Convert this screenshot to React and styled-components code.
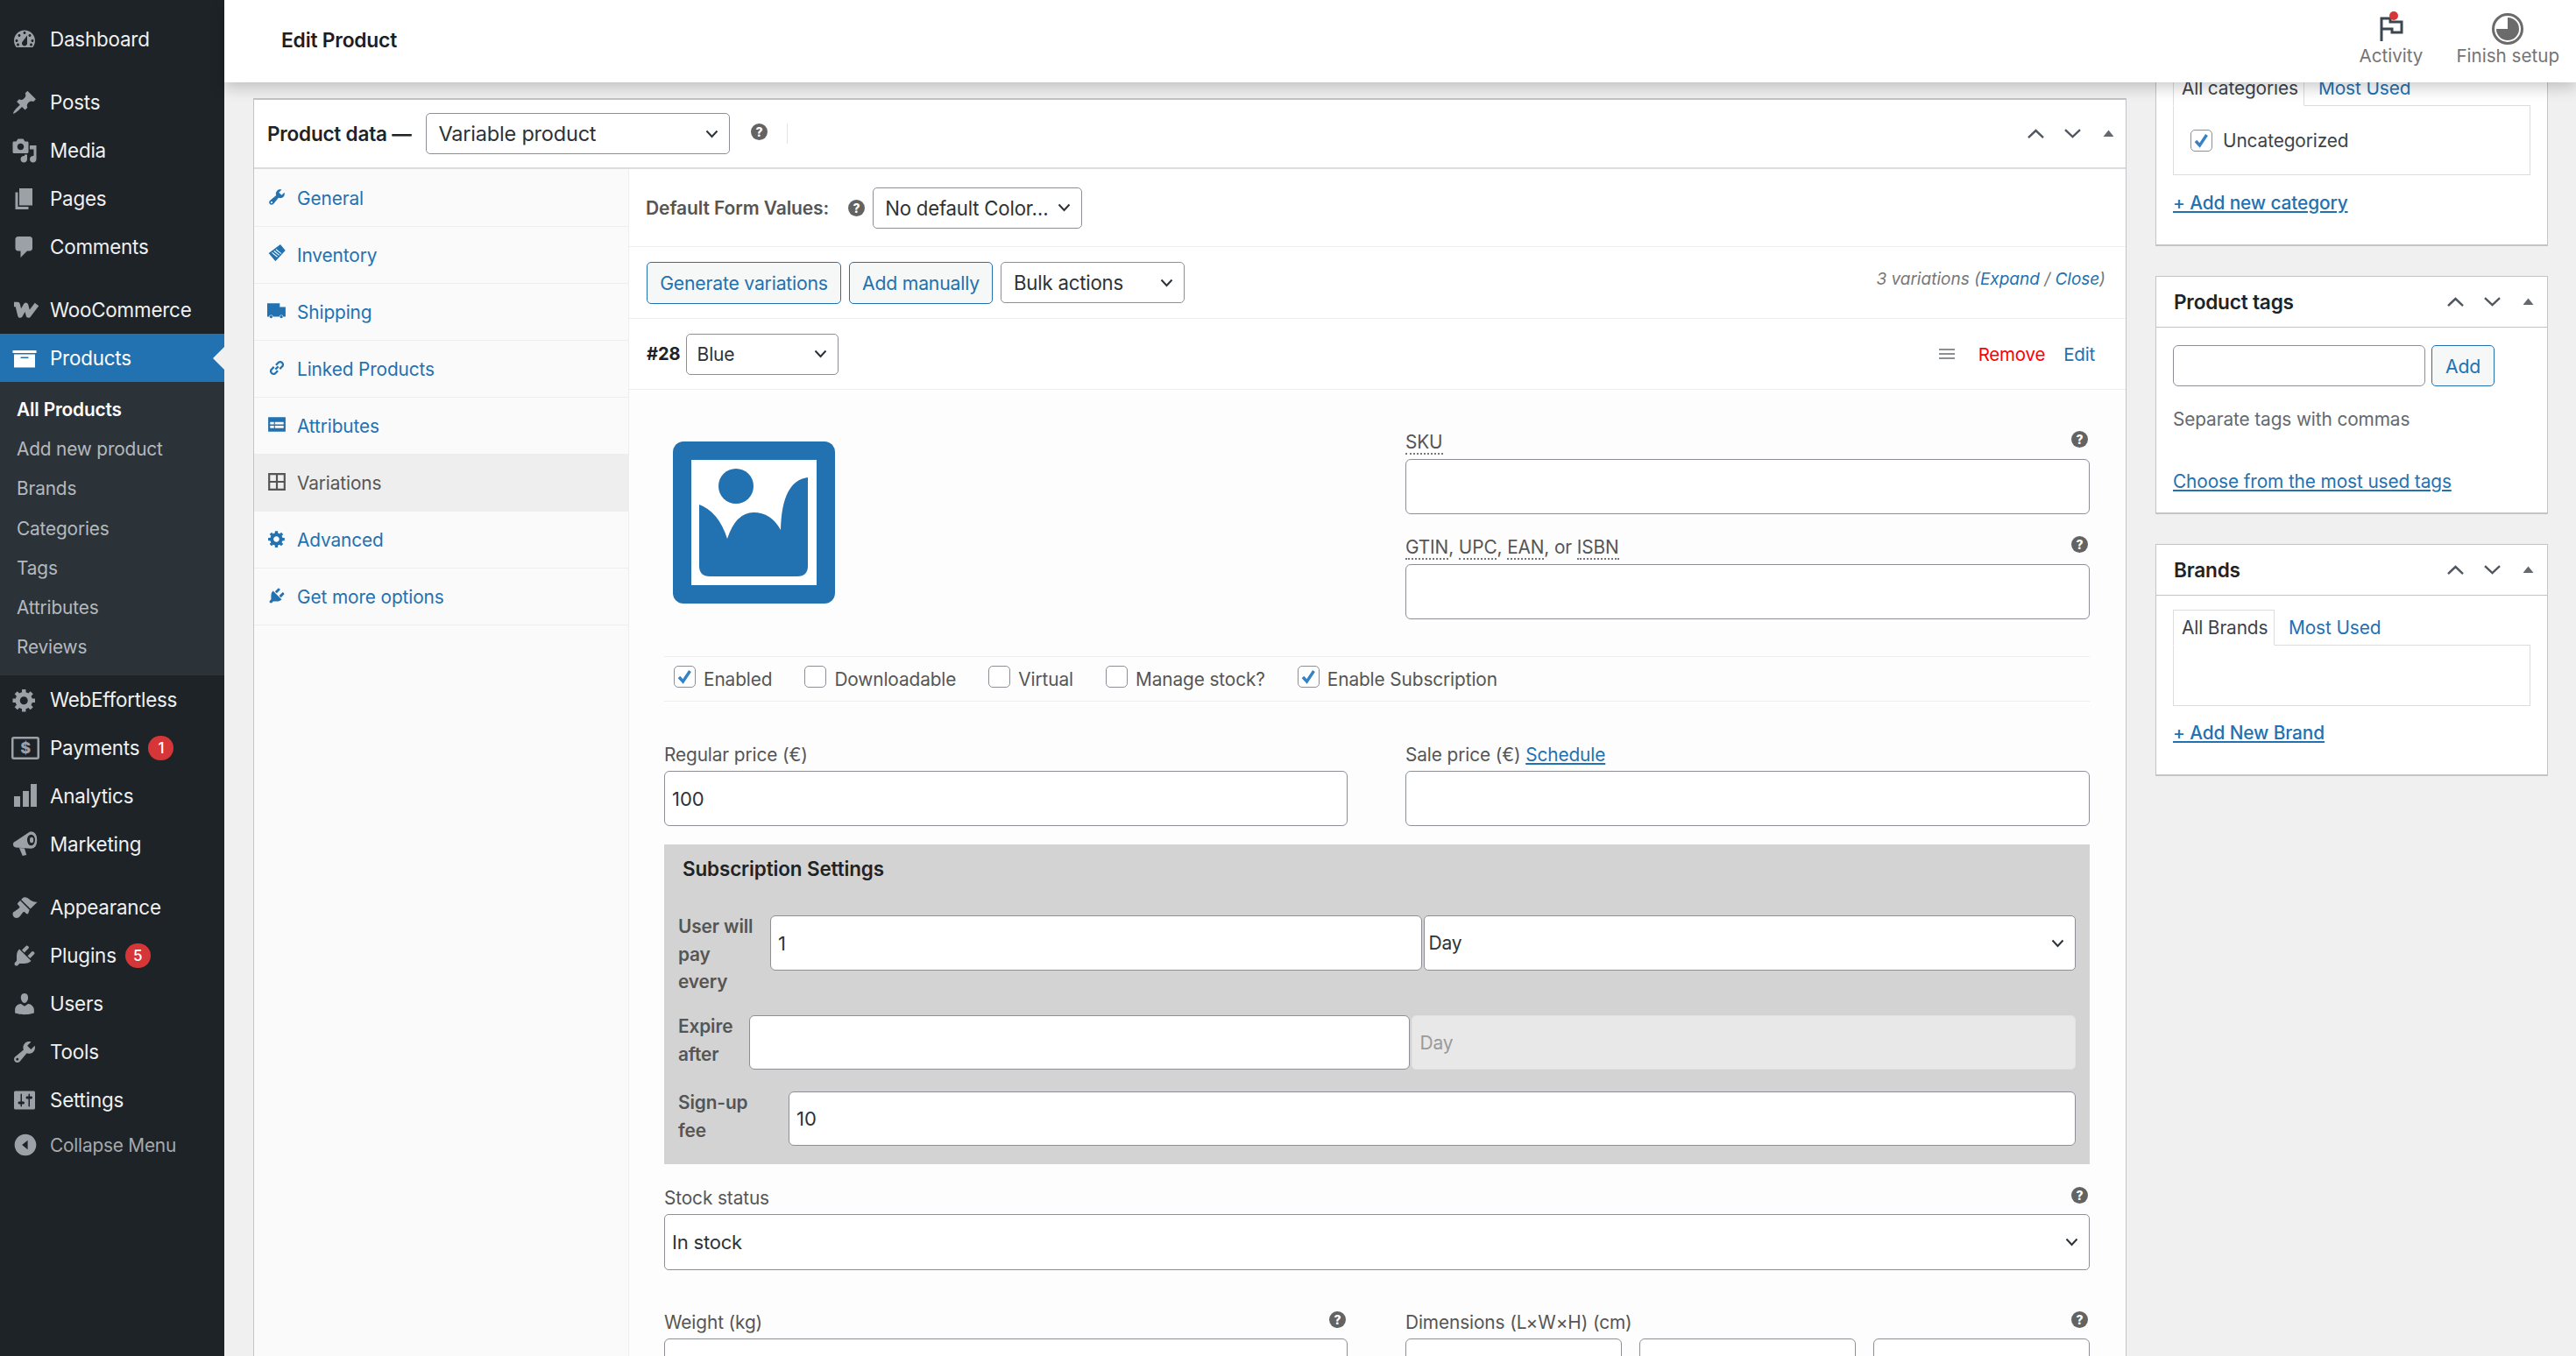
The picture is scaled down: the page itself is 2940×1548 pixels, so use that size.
import React from "react";
import styled, { createGlobalStyle } from "styled-components";

const GlobalStyle = createGlobalStyle`
  html, body { margin: 0; padding: 0; background: #f0f0f1; }
  * { box-sizing: border-box; }
  body { font-family: Inter, "Noto Sans", sans-serif; font-size: 20.8px; color: #3c434a; }
`;

const blue = "#2271b1";

const Page = styled.div`
  display: flex;
  width: 2940px;
  height: 1548px;
  overflow: hidden;
  background: #f0f0f1;
`;

/* ---------- admin menu ---------- */
const Sidebar = styled.nav`
  width: 256px;
  flex-shrink: 0;
  padding-top: 17px;
  background: #1d2327;
`;
const MenuGroup = styled.div`
  margin-bottom: 17px;
`;
const MenuRow = styled.div`
  position: relative;
  display: flex;
  align-items: center;
  height: 55px;
  padding-left: 57px;
  font-size: 22.4px;
  letter-spacing: -0.2px;
  color: ${(p) => (p.$active ? "#fff" : "#f0f0f1")};
  background: ${(p) => (p.$active ? blue : "transparent")};
  svg { position: absolute; left: ${(p) => p.$iconLeft || 13}px; top: 50%; transform: translateY(-50%); fill: ${(p) => (p.$active ? "#fff" : "#9ca1a7")}; }
  ${(p) => p.$active && `
    &::after {
      content: "";
      position: absolute;
      right: 0;
      top: 50%;
      margin-top: -13px;
      border: 13px solid transparent;
      border-right-color: #f0f0f1;
      border-left-width: 0;
    }
  `}
`;
const Badge = styled.span`
  display: inline-flex;
  align-items: center;
  justify-content: center;
  width: 29px;
  height: 28px;
  margin-left: 10px;
  border-radius: 14px;
  background: #d63638;
  color: #fff;
  font-size: 17px;
  font-weight: 500;
`;
const Submenu = styled.div`
  height: 335px;
  padding-top: 9px;
  background: #2c3338;
`;
const SubItem = styled.div`
  display: flex;
  align-items: center;
  height: 45.2px;
  padding-left: 19px;
  font-size: 20.8px;
  letter-spacing: -0.15px;
  color: ${(p) => (p.$active ? "#fff" : "#b4b9be")};
  font-weight: ${(p) => (p.$active ? 600 : 400)};
`;
const CollapseRow = styled(MenuRow)`
  height: 48px;
  font-size: 20.8px;
  color: #a7aaad;
`;

/* ---------- top bar ---------- */
const Main = styled.div`
  flex: 1;
  min-width: 0;
  display: flex;
  flex-direction: column;
`;
const TopBar = styled.header`
  position: relative;
  z-index: 2;
  flex-shrink: 0;
  display: flex;
  align-items: center;
  justify-content: space-between;
  height: 94px;
  padding: 0 19px 0 65px;
  background: #fff;
  box-shadow: 0 6px 16px rgba(0, 0, 0, 0.2);
`;
const PageTitle = styled.h1`
  margin: -3px 0 0;
  font-size: 22.8px;
  font-weight: 600;
  letter-spacing: -0.2px;
  color: #1e1e1e;
`;
const TopActions = styled.div`
  display: flex;
  gap: 38px;
  margin-top: -6px;
`;
const TopAction = styled.div`
  display: flex;
  flex-direction: column;
  align-items: center;
  gap: 1px;
  font-size: 20.6px;
  line-height: 24px;
  color: #757575;
  svg { display: block; }
`;

/* ---------- page body ---------- */
const Body = styled.div`
  flex: 1;
  min-height: 0;
  display: flex;
  gap: 33px;
  padding: 18px 32px 0 33px;
  overflow: hidden;
`;
const Panel = styled.section`
  flex: 1;
  min-width: 0;
  align-self: flex-start;
  background: #fff;
  border: 1px solid #c3c4c7;
  border-top-width: 2px;
`;
const PanelHead = styled.div`
  display: flex;
  align-items: center;
  height: 79px;
  padding: 0 13px 0 15px;
  border-bottom: 2px solid #dcdcde;
`;
const PanelTitle = styled.div`
  font-size: 22.5px;
  font-weight: 600;
  letter-spacing: -0.2px;
  color: #1d2327;
  margin-right: 16px;
`;
const PanelHelp = styled.span`
  display: block;
  height: 19px;
  margin: -5px 0 0 24px;
  svg { display: block; }
`;
const VLine = styled.span`
  width: 1px;
  height: 23px;
  margin-left: 22px;
  background: #e4e4e6;
`;
const MoveButtons = styled.div`
  margin-left: auto;
  display: flex;
  align-items: center;
  gap: 21px;
  svg { display: block; }
  svg:last-child { margin-left: 3px; }
`;

const Columns = styled.div`
  display: flex;
`;
const Tabs = styled.ul`
  width: 428px;
  flex-shrink: 0;
  margin: 0;
  padding: 1px 0 0;
  list-style: none;
  background: #fafafa;
  border-right: 1px solid #eee;
`;
const Tab = styled.li`
  position: relative;
  display: flex;
  align-items: center;
  height: 65px;
  padding-left: 49px;
  font-size: 20.8px;
  letter-spacing: -0.1px;
  color: ${(p) => (p.$active ? "#555" : blue)};
  background: ${(p) => (p.$active ? "#eee" : "transparent")};
  border-bottom: 1px solid #eee;
  svg { position: absolute; left: 15px; top: 20px; fill: ${(p) => (p.$active ? "#555" : blue)}; }
`;
const Content = styled.div`
  flex: 1;
  min-width: 0;
`;
const DefaultsRow = styled.div`
  display: flex;
  align-items: center;
  height: 89px;
  padding-left: 19px;
  border-bottom: 1px solid #eee;
`;
const BoldLabel = styled.span`
  font-size: 21px;
  font-weight: 600;
  letter-spacing: -0.1px;
  color: #555;
  margin-right: 22px;
`;
const DefaultSelectWrap = styled.div`
  margin-left: 9px;
`;
const ToolbarRow = styled.div`
  display: flex;
  align-items: center;
  gap: 9px;
  height: 82px;
  padding: 0 23px 0 20px;
  border-bottom: 1px solid #eee;
`;
const Button = styled.span`
  display: inline-flex;
  align-items: center;
  justify-content: center;
  height: ${(p) => p.$height || 48}px;
  width: ${(p) => p.$width}px;
  border: 1px solid ${blue};
  border-radius: 5px;
  background: #f6f7f7;
  color: ${blue};
  font-size: 21.2px;
  letter-spacing: -0.2px;
`;
const Count = styled.span`
  margin-left: auto;
  margin-top: -9px;
  font-size: 19px;
  font-style: italic;
  color: #777;
  a { color: ${blue}; }
`;
const VariationRow = styled.div`
  display: flex;
  align-items: center;
  height: 81px;
  padding: 0 35px 0 20px;
  border-bottom: 1px solid #eee;
`;
const VariationId = styled.strong`
  font-size: 20px;
  font-weight: 700;
  color: #1d2327;
  margin-right: 6px;
`;
const VariationActions = styled.div`
  margin-left: auto;
  display: flex;
  align-items: center;
  font-size: 20.5px;
  letter-spacing: -0.2px;
`;
const ActionLink = styled.a`
  color: ${(p) => p.$color};
  margin-left: ${(p) => p.$gap}px;
`;

/* ---------- form controls ---------- */
const Select = styled.div`
  display: flex;
  align-items: center;
  justify-content: space-between;
  flex: ${(p) => (p.$width ? "none" : 1)};
  width: ${(p) => (p.$width ? `${p.$width}px` : "auto")};
  min-width: 0;
  height: ${(p) => p.$height || 47}px;
  padding: 0 12px 0 ${(p) => p.$left || 14}px;
  background: #fff;
  border: 1px solid #8c8f94;
  border-radius: 5px;
  font-size: ${(p) => p.$size || 22.2}px;
  letter-spacing: -0.2px;
  color: #2c3338;
  white-space: nowrap;
`;
const DisabledSelect = styled(Select)`
  background: #e8e8e8;
  border-color: #e2e2e2;
  color: #9a9a9a;
`;
const Input = styled.input`
  display: block;
  flex: ${(p) => (p.$width ? "none" : 1)};
  width: ${(p) => (p.$width ? `${p.$width}px` : "100%")};
  min-width: 0;
  height: ${(p) => p.$height || 63}px;
  padding: 0 8px;
  background: #fff;
  border: 1px solid #8c8f94;
  border-radius: 6px;
  font: inherit;
  font-size: 22px;
  color: #2c3338;
  outline: none;
`;

const Form = styled.div`
  padding: 46px 41px 0 40px;
  background: #fdfdfd;
  height: 1200px;
`;
const TwoCols = styled.div`
  display: grid;
  grid-template-columns: 780px 781px;
  column-gap: 66px;
`;
const ImageBox = styled.div`
  margin: 13px 0 0 10px;
  svg { display: block; }
`;
const FieldBlock = styled.div`
  margin-top: ${(p) => p.$top || 0}px;
`;
const FieldHead = styled.div`
  display: flex;
  align-items: flex-start;
  justify-content: space-between;
  height: 28px;
  margin-bottom: ${(p) => p.$gap ?? 4}px;
`;
const FieldLabel = styled.label`
  font-size: 20.8px;
  line-height: 28px;
  letter-spacing: -0.1px;
  color: #555;
  a { color: ${blue}; text-decoration: underline; }
`;
const Abbr = styled.span`
  border-bottom: 2px dotted #777;
`;
const HelpWrap = styled.span`
  display: block;
  margin: 1px 2px 0 0;
  height: 19px;
  svg { display: block; }
`;
const OptionsRow = styled.div`
  display: flex;
  align-items: center;
  height: 52px;
  margin-top: 42px;
  padding-left: 11px;
  border-top: 1px solid #eee;
  border-bottom: 1px solid #eee;
`;
const Option = styled.span`
  display: flex;
  align-items: center;
  gap: 9px;
  margin-right: 37px;
  font-size: 20.8px;
  letter-spacing: -0.1px;
  color: #555;
`;
const CheckBox = styled.span`
  display: block;
  width: 25px;
  height: 25px;
  margin-top: ${(p) => (p.$flat ? 0 : -6)}px;
  flex-shrink: 0;
  background: #fff;
  border: 1px solid #8c8f94;
  border-radius: 5px;
  svg { display: block; }
`;
const DimInputs = styled.div`
  display: flex;
  gap: 20px;
`;
const SubBox = styled.div`
  margin-top: 21px;
  padding: 14px 16px 21px;
  background: #d3d3d3;
`;
const SubTitle = styled.h4`
  margin: 0 0 39px 5px;
  font-size: 22.4px;
  line-height: 28px;
  font-weight: 600;
  letter-spacing: -0.1px;
  color: #1d2327;
`;
const SubRow = styled.div`
  display: flex;
  align-items: flex-start;
  gap: 2px;
  height: ${(p) => p.$height}px;
`;
const SubLabel = styled.label`
  flex: none;
  width: ${(p) => p.$width}px;
  margin: -3px -2px 0 0;
  font-size: 20.8px;
  font-weight: 600;
  line-height: 31.5px;
  letter-spacing: -0.1px;
  color: #555;
`;

/* ---------- side boxes ---------- */
const SideColumn = styled.aside`
  width: 448px;
  flex-shrink: 0;
  margin-top: -38px;
`;
const SideBox = styled.div`
  height: ${(p) => p.$height}px;
  margin-bottom: 34px;
  background: #fff;
  border: 1px solid #c3c4c7;
  border-bottom-width: 2px;
`;
const SideHead = styled.div`
  display: flex;
  align-items: center;
  justify-content: space-between;
  height: 58px;
  padding: 0 15px 0 20px;
  border-bottom: 1px solid #c3c4c7;
`;
const SideTitle = styled.h3`
  margin: 0;
  font-size: 22.6px;
  font-weight: 600;
  letter-spacing: -0.2px;
  color: #1d2327;
`;
const SideInner = styled.div`
  padding: ${(p) => p.$top || 0}px 19px 0;
`;
const TabStrip = styled.div`
  display: flex;
  align-items: center;
  height: 40px;
  font-size: 20.8px;
  letter-spacing: -0.1px;
`;
const TabCurrent = styled.span`
  display: flex;
  align-items: center;
  height: 41px;
  margin-bottom: -1px;
  padding: 0 9px;
  width: ${(p) => p.$width}px;
  background: #fff;
  border: 1px solid #dcdcde;
  border-bottom-color: #fff;
  color: #3c434a;
  position: relative;
  z-index: 1;
  white-space: nowrap;
`;
const TabOther = styled.span`
  margin-left: 16px;
  color: ${blue};
`;
const TabPanel = styled.div`
  display: flex;
  align-items: center;
  height: ${(p) => p.$height}px;
  padding-left: 19px;
  gap: 12px;
  border: 1px solid #dcdcde;
  font-size: 20.8px;
  letter-spacing: -0.1px;
  color: #3c434a;
`;
const SideLink = styled.a`
  display: block;
  margin-top: ${(p) => p.$top}px;
  font-size: 20.8px;
  line-height: 28px;
  letter-spacing: -0.1px;
  color: ${blue};
  text-decoration: underline;
  font-weight: ${(p) => (p.$bold ? 500 : 400)};
`;
const TagRow = styled.div`
  display: flex;
  gap: 7px;
`;
const Hint = styled.p`
  margin: 24px 0 0;
  font-size: 20.8px;
  line-height: 28px;
  letter-spacing: -0.1px;
  color: #646970;
`;

/* ---------- icons ---------- */
const Dash = ({ d, size = 30 }) => (
  <svg width={size} height={size} viewBox="0 0 20 20">
    <path fillRule="evenodd" d={d} />
  </svg>
);

const paths = {
  dashboard: "M3.76 16h12.48c1.1-1.37 1.76-3.11 1.76-5 0-4.42-3.58-8-8-8s-8 3.58-8 8c0 1.89.66 3.63 1.76 5zM10 4c.55 0 1 .45 1 1s-.45 1-1 1-1-.45-1-1 .45-1 1-1zM6 6c.55 0 1 .45 1 1s-.45 1-1 1-1-.45-1-1 .45-1 1-1zm8 0c.55 0 1 .45 1 1s-.45 1-1 1-1-.45-1-1 .45-1 1-1zm-5.37 5.55L12 7v6c0 1.1-.9 2-2 2s-2-.9-2-2c0-.57.24-1.08.63-1.45zM4 10c.55 0 1 .45 1 1s-.45 1-1 1-1-.45-1-1 .45-1 1-1zm12 0c.55 0 1 .45 1 1s-.45 1-1 1-1-.45-1-1 .45-1 1-1zm-11 3c.55 0 1 .45 1 1s-.45 1-1 1-1-.45-1-1 .45-1 1-1zm10 0c.55 0 1 .45 1 1s-.45 1-1 1-1-.45-1-1 .45-1 1-1z",
  post: "M10.44 3.02l1.82-1.82 6.36 6.35-1.83 1.82c-1.05-.68-2.48-.57-3.41.36l-.75.75c-.92.93-1.04 2.35-.35 3.41l-1.83 1.82-2.41-2.41-2.8 2.79c-.42.42-3.38 2.71-3.8 2.29s1.86-3.39 2.28-3.81l2.79-2.79L4.1 9.36l1.83-1.82c1.05.69 2.48.57 3.4-.36l.75-.75c.93-.92 1.05-2.35.36-3.41z",
  media: "M13 11V4c0-.55-.45-1-1-1h-1.67L9 1H5L3.67 3H2c-.55 0-1 .45-1 1v7c0 .55.45 1 1 1h10c.55 0 1-.45 1-1zM7 4.5c1.38 0 2.5 1.12 2.5 2.5S8.38 9.5 7 9.5 4.5 8.38 4.5 7 5.62 4.5 7 4.5zM14 6h5v10.5c0 1.38-1.12 2.5-2.5 2.5S14 17.88 14 16.5s1.12-2.5 2.5-2.5c.17 0 .34.02.5.05V9h-3V6zm-4 8.05V13h2v3.5c0 1.38-1.12 2.5-2.5 2.5S7 17.88 7 16.5 8.12 14 9.5 14c.17 0 .34.02.5.05z",
  page: "M6 15V2h10v13H6zm-1 1h8v2H3V5h2v11z",
  comments: "M5 2h9c1.1 0 2 .9 2 2v7c0 1.1-.9 2-2 2h-2l-5 5v-5H5c-1.1 0-2-.9-2-2V4c0-1.1.9-2 2-2z",
  archive: "M19 4v2H1V4h18zM2 7h16v10H2V7zm11 3V9H7v1h6z",
  gear: "M18 12h-2.18c-.17.7-.44 1.35-.81 1.93l1.54 1.54-2.1 2.1-1.54-1.54c-.58.36-1.23.63-1.91.79V19H8v-2.18c-.68-.16-1.33-.43-1.91-.79l-1.54 1.54-2.12-2.12 1.54-1.54c-.36-.58-.63-1.23-.79-1.91H1V9.03h2.17c.16-.7.44-1.35.8-1.94L2.43 5.55l2.1-2.1 1.54 1.54c.58-.37 1.24-.64 1.93-.81V2h3v2.18c.68.16 1.33.43 1.91.79l1.54-1.54 2.12 2.12-1.54 1.54c.36.59.64 1.24.8 1.94H18V12zm-8.5 1.5c1.66 0 3-1.34 3-3s-1.34-3-3-3-3 1.34-3 3 1.34 3 3 3z",
  bars: "M2 10h4.700v8H2zM8.700 6h4.600v12H8.700zM14.700.7h4.600V18h-4.600z",
  brush: "M14.48 11.06L7.41 3.99l1.5-1.5c.5-.56 2.3-.47 3.51.32 1.21.8 1.43 1.28 2.91 2.1 1.18.64 2.45 1.26 4.45.85zm-.71.71L6.7 4.7 4.93 6.47c-.39.39-.39 1.02 0 1.41l1.06 1.06c.39.39.39 1.03 0 1.42-.6.6-1.43 1.11-2.21 1.69-.35.26-.7.53-1.01.84C1.43 13.23 1 14.07 1 15c0 1.66 1.34 3 3 3 .93 0 1.77-.43 2.33-1.1.31-.31.58-.66.84-1.01.58-.78 1.09-1.61 1.69-2.21.39-.39 1.03-.39 1.42 0l1.06 1.06c.39.39 1.02.39 1.41 0z",
  plugin: "M13.11 4.36L9.87 7.6 8 5.73l3.24-3.24c.35-.34 1.05-.2 1.56.32.52.51.66 1.21.31 1.55zm-8 1.77l.91-1.12 9.01 9.01-1.19.84c-.71.71-2.63 1.16-3.82 1.16H6.14L4.9 17.26c-.59.59-1.54.59-2.12 0-.59-.58-.59-1.53 0-2.12l1.24-1.24v-3.88c0-1.13.4-3.19 1.09-3.89zm7.26 3.97l3.24-3.24c.34-.35 1.04-.21 1.55.31.52.51.66 1.21.31 1.55l-3.24 3.25z",
  users: "M10 9.25c-2.27 0-2.73-3.44-2.73-3.44C7 4.02 7.82 2 9.97 2c2.16 0 2.98 2.02 2.71 3.81 0 0-.41 3.44-2.68 3.44zm0 2.57L12.72 10c2.39 0 4.52 2.33 4.52 4.53v2.49s-3.65 1.13-7.24 1.13c-3.65 0-7.24-1.13-7.24-1.13v-2.49c0-2.25 1.94-4.48 4.47-4.48z",
  wrench: "M16.68 9.77c-1.34 1.34-3.3 1.67-4.95.99l-5.41 6.52c-.99.99-2.59.99-3.58 0s-.99-2.59 0-3.57l6.52-5.42c-.68-1.65-.35-3.61.99-4.95 1.28-1.28 3.12-1.62 4.72-1.06l-2.89 2.89 2.82 2.82 2.86-2.87c.53 1.58.18 3.39-1.08 4.65zM3.81 16.21c.4.39 1.04.39 1.43 0 .4-.4.4-1.04 0-1.43-.39-.4-1.03-.4-1.43 0-.39.39-.39 1.03 0 1.43z",
  settings: "M18 16V4c0-.55-.45-1-1-1H3c-.55 0-1 .45-1 1v12c0 .55.45 1 1 1h14c.55 0 1-.45 1-1zM8 11h1c.55 0 1 .45 1 1s-.45 1-1 1H8v1.5c0 .28-.22.5-.5.5s-.5-.22-.5-.5V13H6c-.55 0-1-.45-1-1s.45-1 1-1h1V5.5c0-.28.22-.5.5-.5s.5.22.5.5V11zm5-2h-1c-.55 0-1-.45-1-1s.45-1 1-1h1V5.5c0-.28.22-.5.5-.5s.5.22.5.5V7h1c.55 0 1 .45 1 1s-.45 1-1 1h-1v5.5c0 .28-.22.5-.5.5s-.5-.22-.5-.5V9z",
  collapse: "M10 .5c5.25 0 9.5 4.25 9.5 9.5s-4.25 9.5-9.5 9.5S.5 15.25.5 10 4.75.5 10 .5zM12 14V6l-5 4z",
  truck: "M0 2h13v4h6v10h-2.400a2 2 0 0 0-4 0H6a2 2 0 0 0-4 0H0z",
  link: "M8.500 11.500l3-3M7 9l-3 3a3 3 0 0 0 4 4l3-3M13 11l3-3a3 3 0 0 0-4-4L9 7",
  list: "M1 2h18v15H1zM3 7h4v2.500H3zM3 11h4v2.500H3zM8 7h9v2.500H8zM8 11h9v2.500H8z",
};

const Help = ({ size = 19 }) => (
  <svg width={size} height={size} viewBox="0 0 19 19">
    <circle cx="9.500" cy="9.500" r="9.500" fill="#636363" />
    <text x="9.500" y="14.500" textAnchor="middle" fontSize="14" fontWeight="800" fontFamily="Inter, sans-serif" fill="#fff">?</text>
  </svg>
);

const Chevron = ({ up, size = 21, color = "#50575e", weight = 2.4 }) => (
  <svg width={size} height={size * 0.62} viewBox="0 0 21 13">
    <path d={up ? "M2 11L10.500 3 19 11" : "M2 2l8.500 8L19 2"} fill="none" stroke={color} strokeWidth={weight} />
  </svg>
);

const Caret = () => (
  <svg width="13" height="13" viewBox="0 0 13 13">
    <path d="M6.500 2.500L12.500 10H.5z" fill="#646970" />
  </svg>
);

const SelectArrow = () => (
  <svg width="15" height="10" viewBox="0 0 15 10" style={{ flexShrink: 0 }}>
    <path d="M1.500 1.500l6 6.500 6-6.500" fill="none" stroke="#2c3338" strokeWidth="2" />
  </svg>
);

const Tick = () => (
  <svg width="23" height="23" viewBox="0 0 23 23">
    <path d="M5 12l4.500 5L17.500 5" fill="none" stroke="#3582c4" strokeWidth="3.400" />
  </svg>
);

const MoveTrio = () => (
  <MoveButtons>
    <Chevron up />
    <Chevron />
    <Caret />
  </MoveButtons>
);

const Placeholder = () => (
  <svg width="185" height="185" viewBox="0 0 185 185">
    <rect width="185" height="185" rx="12" fill={blue} />
    <rect x="21" y="21" width="143" height="143" fill="#fff" />
    <circle cx="72" cy="51" r="20" fill={blue} />
    <path
      d="M30 72Q52 80 62 111 72 81 92 81 112 81 123 101 124 45 154 41V142Q154 154 142 154H42Q30 154 30 142Z"
      fill={blue}
    />
  </svg>
);

const Checked = ({ on, children }) => (
  <Option>
    <CheckBox>{on && <Tick />}</CheckBox>
    {children}
  </Option>
);

const Field = ({ label, help, gap, children }) => (
  <>
    <FieldHead $gap={gap}>
      <FieldLabel>{label}</FieldLabel>
      {help && (
        <HelpWrap>
          <Help />
        </HelpWrap>
      )}
    </FieldHead>
    {children}
  </>
);

const menuTop = [
  [["Dashboard", "dashboard"]],
  [
    ["Posts", "post"],
    ["Media", "media"],
    ["Pages", "page"],
    ["Comments", "comments"],
  ],
];
const menuBottom = [
  ["Appearance", "brush"],
  ["Plugins", "plugin", 5],
  ["Users", "users"],
  ["Tools", "wrench"],
  ["Settings", "settings"],
];
const subItems = ["Add new product", "Brands", "Categories", "Tags", "Attributes", "Reviews"];

const tabList = [
  ["General", "wrench"],
  ["Inventory", "tag"],
  ["Shipping", "truck"],
  ["Linked Products", "link"],
  ["Attributes", "list"],
  ["Variations", "grid"],
  ["Advanced", "gear"],
  ["Get more options", "plugin"],
];

const TabIcon = ({ name }) => {
  if (name === "tag") {
    return (
      <svg width="22" height="22" viewBox="0 0 20 20">
        <path d="M1.500 9.100L13.600 0l5.200 6.400L8.500 17.500z" />
        <path d="M5 8.500l5.500 4.500M7 6.800l5.500 4.500M9 5.200l5.500 4.500" stroke="#fafafa" strokeWidth="1" />
      </svg>
    );
  }
  if (name === "link") {
    return (
      <svg width="22" height="22" viewBox="0 0 20 20">
        <path d={paths.link} fill="none" stroke={blue} strokeWidth="2" />
      </svg>
    );
  }
  if (name === "grid") {
    return (
      <svg width="22" height="22" viewBox="0 0 20 20">
        <path
          fillRule="evenodd"
          d="M1 1h18v18H1V1zm2 2v6h6V3H3zm8 0v6h6V3h-6zM3 11v6h6v-6H3zm8 0v6h6v-6h-6z"
        />
      </svg>
    );
  }
  if (name === "truck") {
    return (
      <svg width="22" height="22" viewBox="0 0 20 20">
        <path d={paths.truck} />
        <circle cx="4" cy="16" r="1.500" />
        <circle cx="14.600" cy="16" r="1.500" />
      </svg>
    );
  }
  return <Dash d={paths[name]} size={22} />;
};

const Activity = () => (
  <svg width="30" height="39" viewBox="0 0 30 39">
    <path d="M4 35V9h10v4h13v12H16v-4H4" fill="none" stroke="#3c4650" strokeWidth="3" />
    <circle cx="18" cy="6" r="5" fill="#d63638" />
  </svg>
);

const Finish = () => (
  <svg width="38" height="39" viewBox="0 0 38 39">
    <circle cx="19" cy="21" r="16.500" fill="none" stroke="#6b6b6b" strokeWidth="3" />
    <path d="M19 8a13 13 0 1 1-13 13h13z" fill="#6b6b6b" />
  </svg>
);

const WooLogo = () => (
  <svg width="32" height="20" viewBox="0 0 32 20">
    <path
      d="M3 3.500h4L10 16 16.500 4.500 19.500 16 29 3.500"
      fill="none"
      stroke="#9ca1a7"
      strokeWidth="5.600"
      strokeLinejoin="round"
    />
  </svg>
);

const Payments = () => (
  <svg width="32" height="26" viewBox="0 0 32 26">
    <rect x="1.250" y="1.250" width="29.500" height="23.500" rx="1.500" fill="none" stroke="#9ca1a7" strokeWidth="2.500" />
    <text x="16" y="19" textAnchor="middle" fontSize="18" fontWeight="800" fontFamily="Inter, sans-serif" fill="#9ca1a7">$</text>
  </svg>
);

const Megaphone = () => (
  <svg width="30" height="30" viewBox="0 0 20 20">
    <path d="M1.300 10Q1.300 8 3 7.600L13.500.6Q14.300.2 15 .2 19.500.5 19.500 6.700 19.500 13 15 13.200L3.500 12.300Q1.300 12 1.300 10Z" />
    <path d="M6 12.700L10 13 11.500 18 8.500 18.700Z" />
    <ellipse cx="15" cy="6.700" rx="3" ry="4.200" fill="#1d2327" />
    <ellipse cx="15.400" cy="6.700" rx="1.400" ry="2.200" />
  </svg>
);

export default function App() {
  return (
    <Page>
      <GlobalStyle />
      <Sidebar>
        {menuTop.map((group, i) => (
          <MenuGroup key={i}>
            {group.map(([label, icon]) => (
              <MenuRow key={label}>
                <Dash d={paths[icon]} />
                {label}
              </MenuRow>
            ))}
          </MenuGroup>
        ))}
        <MenuRow>
          <WooLogo />
          WooCommerce
        </MenuRow>
        <MenuRow $active>
          <Dash d={paths.archive} />
          Products
        </MenuRow>
        <Submenu>
          <SubItem $active>All Products</SubItem>
          {subItems.map((s) => (
            <SubItem key={s}>{s}</SubItem>
          ))}
        </Submenu>
        <MenuGroup>
          <MenuRow>
            <Dash d={paths.gear} />
            WebEffortless
          </MenuRow>
          <MenuRow>
            <Payments />
            Payments
            <Badge>1</Badge>
          </MenuRow>
          <MenuRow>
            <Dash d={paths.bars} />
            Analytics
          </MenuRow>
          <MenuRow>
            <Megaphone />
            Marketing
          </MenuRow>
        </MenuGroup>
        {menuBottom.map(([label, icon, badge]) => (
          <MenuRow key={label}>
            <Dash d={paths[icon]} />
            {label}
            {badge && <Badge>{badge}</Badge>}
          </MenuRow>
        ))}
        <CollapseRow $iconLeft={16}>
          <Dash d={paths.collapse} size={26} />
          Collapse Menu
        </CollapseRow>
      </Sidebar>

      <Main>
        <TopBar>
          <PageTitle>Edit Product</PageTitle>
          <TopActions>
            <TopAction>
              <Activity />
              Activity
            </TopAction>
            <TopAction>
              <Finish />
              Finish setup
            </TopAction>
          </TopActions>
        </TopBar>

        <Body>
          <Panel>
            <PanelHead>
              <PanelTitle>Product data —</PanelTitle>
              <Select $width={347} $size={23.5}>
                Variable product
                <SelectArrow />
              </Select>
              <PanelHelp>
                <Help />
              </PanelHelp>
              <VLine />
              <MoveTrio />
            </PanelHead>
            <Columns>
              <Tabs>
                {tabList.map(([label, icon]) => (
                  <Tab key={label} $active={label === "Variations"}>
                    <TabIcon name={icon} />
                    {label}
                  </Tab>
                ))}
              </Tabs>
              <Content>
                <DefaultsRow>
                  <BoldLabel>Default Form Values:</BoldLabel>
                  <Help />
                  <DefaultSelectWrap>
                    <Select $width={239} $left={13}>
                      No default Color…
                      <SelectArrow />
                    </Select>
                  </DefaultSelectWrap>
                </DefaultsRow>
                <ToolbarRow>
                  <Button $width={222}>Generate variations</Button>
                  <Button $width={164}>Add manually</Button>
                  <Select $width={210}>
                    Bulk actions
                    <SelectArrow />
                  </Select>
                  <Count>
                    3 variations (<a>Expand</a> / <a>Close</a>)
                  </Count>
                </ToolbarRow>
                <VariationRow>
                  <VariationId>#28</VariationId>
                  <Select $width={174} $left={12} $size={21}>
                    Blue
                    <SelectArrow />
                  </Select>
                  <VariationActions>
                    <svg width="18" height="14" viewBox="0 0 18 14">
                      <path d="M0 1h18v2H0zM0 6h18v2H0zM0 11h18v2H0z" fill="#8c8f94" />
                    </svg>
                    <ActionLink $color="#f00" $gap={27}>Remove</ActionLink>
                    <ActionLink $color={blue} $gap={21}>Edit</ActionLink>
                  </VariationActions>
                </VariationRow>

                <Form>
                  <TwoCols>
                    <ImageBox>
                      <Placeholder />
                    </ImageBox>
                    <div>
                      <Field label={<Abbr>SKU</Abbr>} help gap={5}>
                        <Input readOnly />
                      </Field>
                      <FieldBlock $top={24}>
                        <Field
                          label={
                            <>
                              <Abbr>GTIN</Abbr>, <Abbr>UPC</Abbr>, <Abbr>EAN</Abbr>, or <Abbr>ISBN</Abbr>
                            </>
                          }
                          help
                          gap={5}
                        >
                          <Input readOnly />
                        </Field>
                      </FieldBlock>
                    </div>
                  </TwoCols>

                  <OptionsRow>
                    <Checked on>Enabled</Checked>
                    <Checked>Downloadable</Checked>
                    <Checked>Virtual</Checked>
                    <Checked>Manage stock?</Checked>
                    <Checked on>Enable Subscription</Checked>
                  </OptionsRow>

                  <FieldBlock $top={47}>
                    <TwoCols>
                      <div>
                        <Field label="Regular price (€)">
                          <Input readOnly value="100" />
                        </Field>
                      </div>
                      <div>
                        <Field
                          label={
                            <>
                              Sale price (€) <a>Schedule</a>
                            </>
                          }
                        >
                          <Input readOnly />
                        </Field>
                      </div>
                    </TwoCols>
                  </FieldBlock>

                  <SubBox>
                    <SubTitle>Subscription Settings</SubTitle>
                    <SubRow $height={114}>
                      <SubLabel $width={105}>
                        User will
                        <br />
                        pay
                        <br />
                        every
                      </SubLabel>
                      <Input readOnly value="1" $height={63} />
                      <Select $height={63} $left={5} $size={21}>
                        Day
                        <SelectArrow />
                      </Select>
                    </SubRow>
                    <SubRow $height={87}>
                      <SubLabel $width={81}>
                        Expire
                        <br />
                        after
                      </SubLabel>
                      <Input readOnly $height={62} />
                      <DisabledSelect $height={62} $left={9} $size={21}>Day</DisabledSelect>
                    </SubRow>
                    <SubRow $height={62}>
                      <SubLabel $width={126}>
                        Sign-up
                        <br />
                        fee
                      </SubLabel>
                      <Input readOnly value="10" $height={62} />
                    </SubRow>
                  </SubBox>

                  <FieldBlock $top={25}>
                    <Field label="Stock status" help>
                      <Select $height={64} $left={8} $size={22}>
                        In stock
                        <SelectArrow />
                      </Select>
                    </Field>
                  </FieldBlock>

                  <FieldBlock $top={46}>
                    <TwoCols>
                      <div>
                        <Field label="Weight (kg)" help>
                          <Input readOnly />
                        </Field>
                      </div>
                      <div>
                        <Field label="Dimensions (L×W×H) (cm)" help>
                          <DimInputs>
                            <Input readOnly />
                            <Input readOnly />
                            <Input readOnly />
                          </DimInputs>
                        </Field>
                      </div>
                    </TwoCols>
                  </FieldBlock>
                </Form>
              </Content>
            </Columns>
          </Panel>

          <SideColumn>
            <SideBox $height={207}>
              <SideInner $top={5}>
                <TabStrip>
                  <TabCurrent $width={150}>All categories</TabCurrent>
                  <TabOther>Most Used</TabOther>
                </TabStrip>
                <TabPanel $height={80}>
                  <CheckBox $flat>
                    <Tick />
                  </CheckBox>
                  Uncategorized
                </TabPanel>
                <SideLink $top={18} $bold>+ Add new category</SideLink>
              </SideInner>
            </SideBox>

            <SideBox $height={272}>
              <SideHead>
                <SideTitle>Product tags</SideTitle>
                <MoveTrio />
              </SideHead>
              <SideInner $top={20}>
                <TagRow>
                  <Input readOnly $height={47} $width={288} />
                  <Button $width={72} $height={47}>Add</Button>
                </TagRow>
                <Hint>Separate tags with commas</Hint>
                <SideLink $top={43}>Choose from the most used tags</SideLink>
              </SideInner>
            </SideBox>

            <SideBox $height={265}>
              <SideHead>
                <SideTitle>Brands</SideTitle>
                <MoveTrio />
              </SideHead>
              <SideInner $top={16}>
                <TabStrip>
                  <TabCurrent $width={116}>All Brands</TabCurrent>
                  <TabOther>Most Used</TabOther>
                </TabStrip>
                <TabPanel $height={70} />
                <SideLink $top={17} $bold>+ Add New Brand</SideLink>
              </SideInner>
            </SideBox>
          </SideColumn>
        </Body>
      </Main>
    </Page>
  );
}
